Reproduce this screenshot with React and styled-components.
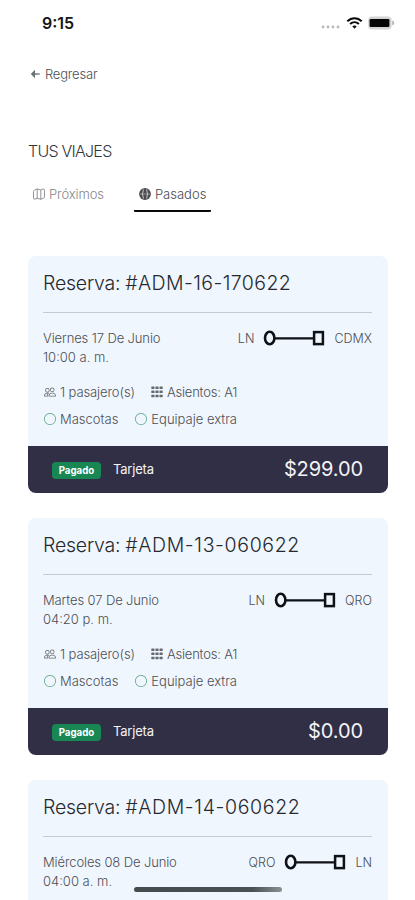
import React, { useState } from 'react';
import styled, { createGlobalStyle } from 'styled-components';
import { BsPeople, BsCircle } from 'react-icons/bs';

const GlobalStyle = createGlobalStyle`
* { box-sizing: border-box; }
body {
  margin: 0;
  height: 900px;
  overflow: hidden;
  background: #fff;
  color: #4c4f54;
  font-family: "Inter", "Liberation Sans", sans-serif;
}
`;

const Screen = styled.div`
  position: relative;
  height: 900px;
  overflow: hidden;
  padding: 0 27px 0 28px;
`;

const StatusBar = styled.div`
  display: flex;
  align-items: center;
  justify-content: space-between;
  height: 46px;
  padding: 0 0 0 14px;
`;

const Clock = styled.span`
  font-size: 16px;
  font-weight: 600;
  color: #161616;
  letter-spacing: 0;
`;

const StatusIcons = styled.div`
  display: flex;
  align-items: center;
  gap: 5px;
  margin-right: -7px;
`;

const Text = styled.span`
  font-size: ${props => props.$size || '13px'};
  font-weight: ${props => props.$weight || 300};
  letter-spacing: ${props => props.$track || '0'};
  color: ${props => props.$color || 'inherit'};
  white-space: nowrap;
`;

const Back = styled.a`
  display: flex;
  align-items: center;
  gap: 4px;
  height: 20px;
  margin-top: 18px;
  padding-left: 2px;
`;

const Heading = styled.h1`
  margin: 57px 0 0;
  height: 20px;
  line-height: 20px;
  font-size: 16px;
  font-weight: 300;
  letter-spacing: -0.75px;
  color: #34363a;
`;

const Tabs = styled.div`
  display: flex;
  gap: 30px;
  height: 34px;
  margin-top: 17px;
`;

const Tab = styled.div`
  display: flex;
  align-items: center;
  gap: 4px;
  height: 34px;
  padding: ${props => (props.$active ? '0 5px 1px' : '0 0 0 5px')};
  border-bottom: 2px solid ${props => (props.$active ? '#090909' : 'transparent')};
  border-radius: 1px;
  color: ${props => (props.$active ? '#4b4b4f' : '#85878b')};
  cursor: pointer;
`;

const List = styled.div`
  display: flex;
  flex-direction: column;
  gap: 25px;
  margin-top: 44px;
`;

const Card = styled.article`
  flex: none;
  height: 237px;
  display: flex;
  flex-direction: column;
  border-radius: 8px;
  overflow: hidden;
  background: #f0f6fe;
`;

const CardBody = styled.div`
  flex: 1;
  padding: 0 16px 0 15px;
`;

const CardTitle = styled.h2`
  display: flex;
  gap: 5px;
  margin: 0;
  height: 57px;
  line-height: 54px;
  border-bottom: 1px solid #c5cad0;
  color: #26292e;
`;

const Trip = styled.div`
  display: flex;
  justify-content: space-between;
  padding-top: 16px;
`;

const Dates = styled.div`
  display: flex;
  flex-direction: column;
  line-height: 19px;
`;

const Route = styled.div`
  display: flex;
  align-items: center;
  height: 18px;
  gap: 9px;
`;

const Details = styled.div`
  display: flex;
  gap: ${props => props.$gap};
  height: 27px;
  margin-top: ${props => props.$top || '0'};
  padding-left: 1px;
`;

const Detail = styled.div`
  display: flex;
  align-items: center;
  gap: 4px;
`;

const CardFooter = styled.footer`
  display: flex;
  align-items: center;
  height: 47px;
  padding: 0 25px 2px 24px;
  background: #312f46;
  color: #f3f3f6;
`;

const Badge = styled.span`
  width: 49px;
  height: 17px;
  margin: 3px 12px 0 0;
  border-radius: 4px;
  background: #198754;
  color: #fff;
  font-size: 9.7px;
  font-weight: 700;
  line-height: 17px;
  text-align: center;
`;

const Price = styled.span`
  margin-left: auto;
  font-size: 20px;
  letter-spacing: -0.1px;
`;

const HomeBar = styled.div`
  position: absolute;
  left: 134px;
  top: 887px;
  width: 148px;
  height: 5px;
  border-radius: 3px;
  background: linear-gradient(90deg, #454c4e 0%, #4a5153 80%, #8a9093 100%);
`;

const trips = [
  { code: 'ADM-16-170622', track: '0.42px', date: 'Viernes 17 De Junio', time: '10:00 a. m.', from: 'LN', to: 'CDMX', seats: 'A1', price: '$299.00' },
  { code: 'ADM-13-060622', track: '0.64px', date: 'Martes 07 De Junio', time: '04:20 p. m.', from: 'LN', to: 'QRO', seats: 'A1', price: '$0.00' },
  { code: 'ADM-14-060622', track: '0.64px', date: 'Miércoles 08 De Junio', time: '04:00 a. m.', from: 'QRO', to: 'LN' },
];

const ArrowIcon = () => (
  <svg width="11" height="12" viewBox="0 0 11 12">
    <path d="M5 1.8L.8 6L5 10.2V7L9.5 6.5V5.5L5 5Z" fill="#6d7074" />
    <path d="M5 6H10" stroke="#a3a5a8" strokeWidth="1.2" />
  </svg>
);

const SignalIcon = () => (
  <svg width="20" height="14" viewBox="0 0 20 14" fill="#b9b9b9">
    <circle cx="2" cy="11" r="1.4" />
    <circle cx="7" cy="11" r="1.4" />
    <circle cx="12" cy="11" r="1.4" />
    <circle cx="17" cy="11" r="1.4" />
  </svg>
);

const WifiIcon = () => (
  <svg width="17" height="12" viewBox="0 0 16 12" fill="none" stroke="#0b0b0b" strokeWidth="2">
    <path d="M.8 4.3C5 .1 11 .1 15.2 4.3" />
    <path d="M3.6 7.1C6.2 4.7 9.8 4.7 12.4 7.1" />
    <path d="M5.8 9.3C7 8.2 9 8.2 10.2 9.3L8 11.8Z" fill="#0b0b0b" stroke="none" />
  </svg>
);

const BatteryIcon = () => (
  <svg width="27" height="14" viewBox="0 0 27 14">
    <rect x=".2" y=".6" width="23.4" height="12.8" rx="3.6" fill="#d4d4d4" />
    <rect x="1.6" y="3" width="19.8" height="8" rx="1.2" fill="#050505" />
    <path d="M24.2 4.6Q26.3 5.4 26.3 7Q26.3 8.6 24.2 9.4Z" fill="#b4b4b4" />
  </svg>
);

const MapIcon = () => (
  <svg width="12" height="12" viewBox="0 0 12 12" fill="none" stroke="currentColor" strokeWidth=".9" strokeLinejoin="round">
    <path d="M1.7 2.1L4.2.9L7.8 2L10.2.9Q11.5 1 11.5 2.2V9Q11.4 9.8 10.4 10.2L7.8 11.3L4.2 10.2L1.8 11.2Q.6 11.2.5 10V3.4Q.6 2.5 1.7 2.1Z" />
    <path d="M4.2.9V10.2M7.8 2V11.3" />
  </svg>
);

const GlobeIcon = () => (
  <svg width="12" height="12" viewBox="0 0 12 12" fill="none" stroke="#e4e4e6">
    <circle cx="6" cy="6" r="5.9" fill="#4b4b4f" stroke="none" />
    <path d="M4.4 1.4Q2.6 6 4.4 10.6M7.6 1.4Q9.4 6 7.6 10.6" strokeWidth=".8" />
    <path d="M1 6H11" strokeWidth=".5" />
  </svg>
);

const SeatsIcon = () => (
  <svg width="12" height="12" viewBox="0 0 12 12" fill="#66696e">
    {[0.5, 4.6, 8.7].map(y => [0.3, 4.4, 8.5].map(x => (
      <rect key={x + '-' + y} x={x} y={y} width="3.2" height="2.5" rx=".4" />
    )))}
  </svg>
);

const RouteIcon = () => (
  <svg width="62" height="16" viewBox="0 0 62 16" fill="none" stroke="#0e1116">
    <path d="M12 8.3H51" strokeWidth="2.2" />
    <ellipse cx="6.7" cy="8" rx="4.7" ry="6.2" strokeWidth="2.6" />
    <rect x="51.1" y="2.1" width="8.8" height="12" strokeWidth="2.5" />
  </svg>
);

function TripCard(props) {
  const { trip } = props;

  return (
    <Card>
      <CardBody>
        <CardTitle>
          <Text $size="19.5px" $track="-0.22px">Reserva:</Text>
          <Text $size="19.5px" $track={trip.track}>#{trip.code}</Text>
        </CardTitle>
        <Trip>
          <Dates>
            <Text $track="-0.12px">{trip.date}</Text>
            <Text>{trip.time}</Text>
          </Dates>
          <Route>
            <Text $size="12.5px">{trip.from}</Text>
            <RouteIcon />
            <Text $size="12.5px">{trip.to}</Text>
          </Route>
        </Trip>
        {
          trip.seats &&
          <>
            <Details $top="11px" $gap="16px">
              <Detail><BsPeople size={12} color="#66696e" /><Text $track="-0.1px">1 pasajero(s)</Text></Detail>
              <Detail><SeatsIcon /><Text $track="-0.2px">Asientos: {trip.seats}</Text></Detail>
            </Details>
            <Details $gap="17px">
              <Detail><BsCircle size={12} color="#4fa37d" /><Text>Mascotas</Text></Detail>
              <Detail><BsCircle size={12} color="#4fa37d" /><Text>Equipaje extra</Text></Detail>
            </Details>
          </>
        }
      </CardBody>
      {
        trip.price &&
        <CardFooter>
          <Badge>Pagado</Badge>
          <Text $weight={400} $track="-0.2px">Tarjeta</Text>
          <Price>{trip.price}</Price>
        </CardFooter>
      }
    </Card>
  );
}

function App() {
  const [tab, setTab] = useState('pasados');

  return (
    <Screen>
      <GlobalStyle />
      <StatusBar>
        <Clock>9:15</Clock>
        <StatusIcons>
          <SignalIcon />
          <WifiIcon />
          <BatteryIcon />
        </StatusIcons>
      </StatusBar>
      <Back><ArrowIcon /><Text $track="-0.2px">Regresar</Text></Back>
      <Heading>TUS VIAJES</Heading>
      <Tabs>
        <Tab $active={tab === 'proximos'} onClick={() => setTab('proximos')}>
          <MapIcon /><Text $track="-0.1px">Próximos</Text>
        </Tab>
        <Tab $active={tab === 'pasados'} onClick={() => setTab('pasados')}>
          <GlobeIcon /><Text>Pasados</Text>
        </Tab>
      </Tabs>
      <List>
        {trips.map(trip => <TripCard key={trip.code} trip={trip} />)}
      </List>
      <HomeBar />
    </Screen>
  );
}

export default App;
